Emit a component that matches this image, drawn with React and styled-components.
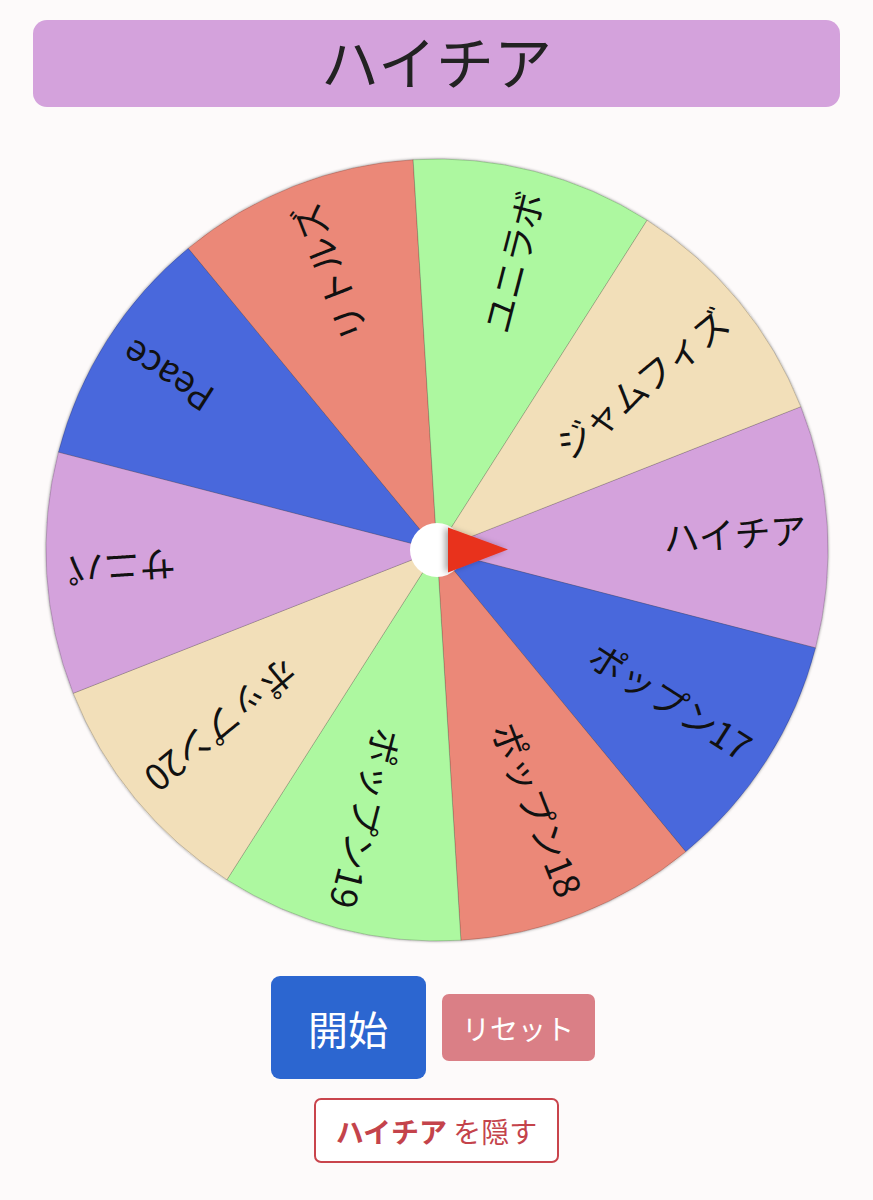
import React from 'react';
import styled, { createGlobalStyle } from 'styled-components';

const GlobalStyle = createGlobalStyle`
  body {
    margin: 0;
    background: #fdfafa;
    font-family: "Noto Sans CJK JP", "Noto Sans", sans-serif;
  }
`;

const R = 391;
const START = -21.5;

const items = [
  { name: 'ハイチア', color: '#d4a2dc' },
  { name: 'ポップン17', color: '#4a68dc' },
  { name: 'ポップン18', color: '#eb8878' },
  { name: 'ポップン19', color: '#adf8a0' },
  { name: 'ポップン20', color: '#f2dfb9' },
  { name: 'サニパ', color: '#d4a2dc' },
  { name: 'Peace', color: '#4a68dc' },
  { name: 'リトルズ', color: '#eb8878' },
  { name: 'ユニラボ', color: '#adf8a0' },
  { name: 'ジャムフィズ', color: '#f2dfb9' },
];

const rad = (d) => (d * Math.PI) / 180;

const slicePath = (a0, a1) => {
  const x0 = R * Math.cos(rad(a0));
  const y0 = R * Math.sin(rad(a0));
  const x1 = R * Math.cos(rad(a1));
  const y1 = R * Math.sin(rad(a1));
  return `M0 0 L${x0} ${y0} A${R} ${R} 0 0 1 ${x1} ${y1} Z`;
};

const Wheel = () => {
  const step = 360 / items.length;
  return (
    <WheelSvg viewBox={`${-R} ${-R} ${R * 2} ${R * 2}`}>
      <defs>
        <filter id="rim" x="-5%" y="-5%" width="110%" height="110%">
          <feDropShadow dx="0" dy="0" stdDeviation="1.5" floodColor="#000" floodOpacity="0.45" />
        </filter>
        <filter id="pin" x="-50%" y="-50%" width="200%" height="200%">
          <feDropShadow dx="-3" dy="0" stdDeviation="3" floodColor="#000" floodOpacity="0.35" />
        </filter>
      </defs>
      <g filter="url(#rim)">
        {items.map((it, i) => {
          const a0 = START + step * i;
          return (
            <path
              key={it.name}
              d={slicePath(a0, a0 + step)}
              fill={it.color}
              stroke="rgba(0,0,0,0.22)"
              strokeWidth="0.8"
            />
          );
        })}
      </g>
      {items.map((it, i) => {
        const c = START + step * i + step / 2;
        return (
          <SliceLabel
            key={it.name}
            transform={`rotate(${c})`}
            x={R - 21}
            y={0}
            textAnchor="end"
            dominantBaseline="central"
          >
            {it.name}
          </SliceLabel>
        );
      })}
      <circle cx="0" cy="0" r="27" fill="#fff" />
      <polygon points="11,-22.5 71,-0.5 11,22.5" fill="#e8321f" filter="url(#pin)" />
    </WheelSvg>
  );
};

export default function App() {
  return (
    <>
      <GlobalStyle />
      <Page>
        <Title>ハイチア</Title>
        <WheelWrap>
          <Wheel />
        </WheelWrap>
        <ButtonRow>
          <StartButton>開始</StartButton>
          <ResetButton>リセット</ResetButton>
        </ButtonRow>
        <HideButton>
          <strong>ハイチア</strong> を隠す
        </HideButton>
      </Page>
    </>
  );
}

const Page = styled.div`
  display: flex;
  flex-direction: column;
  align-items: center;
  padding: 20px 33px 0;
`;

const Title = styled.h1`
  margin: 0;
  width: 100%;
  height: 87px;
  box-sizing: border-box;
  padding-bottom: 8px;
  display: flex;
  align-items: center;
  justify-content: center;
  background: #d4a2dc;
  border-radius: 14px;
  font-size: 58px;
  line-height: 1;
  font-weight: 400;
  color: #222;
`;

const WheelWrap = styled.div`
  margin-top: 52px;
  width: 782px;
  height: 782px;
`;

const WheelSvg = styled.svg`
  display: block;
  width: 100%;
  height: 100%;
  overflow: visible;
`;

const SliceLabel = styled.text`
  font-family: "Noto Sans CJK JP", "Noto Sans", sans-serif;
  font-size: 36px;
  fill: #111;
`;

const ButtonRow = styled.div`
  margin-top: 35px;
  margin-right: 8px;
  display: flex;
  align-items: center;
  gap: 16px;
`;

const BaseButton = styled.button`
  border: none;
  font-family: "Noto Sans CJK JP", "Noto Sans", sans-serif;
  color: #fff;
  padding: 0;
  cursor: pointer;
`;

const StartButton = styled(BaseButton)`
  width: 155px;
  height: 103px;
  background: #2c66d0;
  border-radius: 9px;
  font-size: 40px;
`;

const ResetButton = styled(BaseButton)`
  width: 153px;
  height: 67px;
  background: #da7f86;
  border-radius: 7px;
  font-size: 28px;
`;

const HideButton = styled.button`
  margin-top: 19px;
  width: 245px;
  height: 65px;
  padding: 0;
  background: #fff;
  border: 2px solid #c9444c;
  border-radius: 7px;
  font-family: "Noto Sans CJK JP", "Noto Sans", sans-serif;
  font-size: 28px;
  color: #c4434b;

  strong {
    font-weight: 700;
  }
`;
